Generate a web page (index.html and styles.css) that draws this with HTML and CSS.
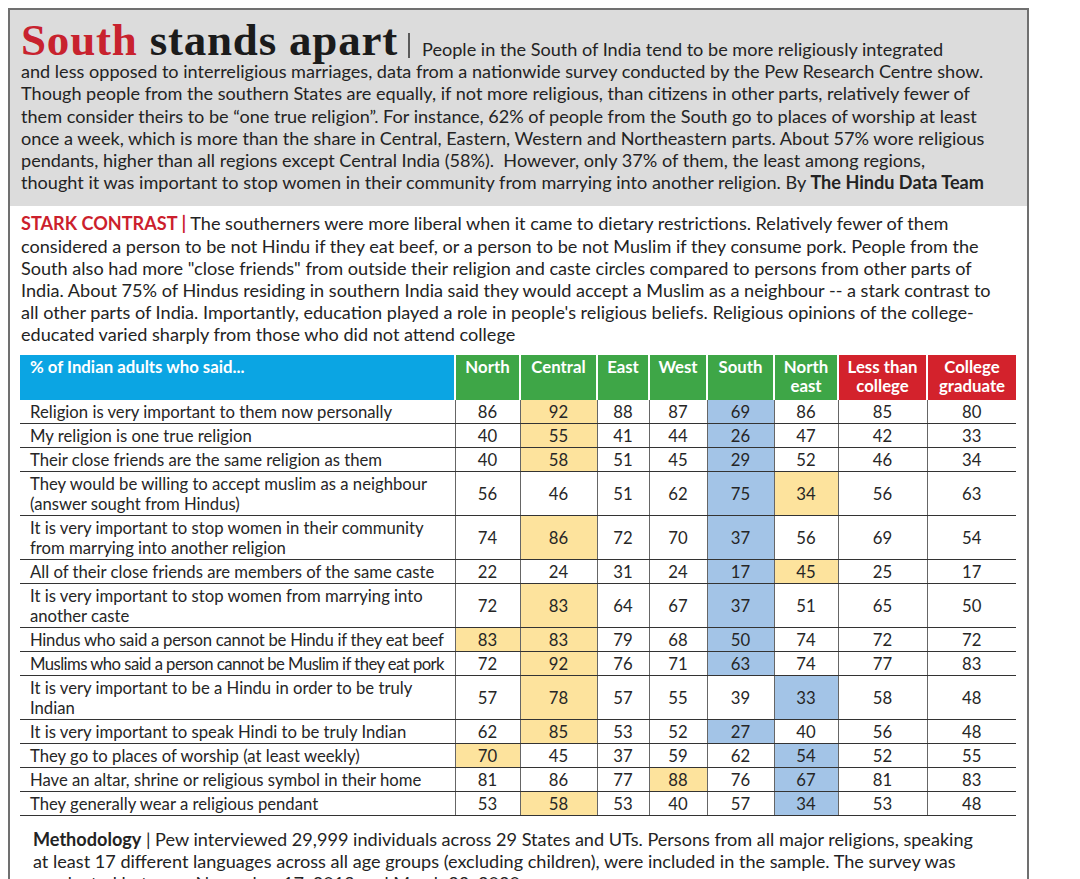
FILE: index.html
```html
<!DOCTYPE html>
<html lang="en">
<head>
<meta charset="utf-8">
<title>South stands apart</title>
<link rel="stylesheet" href="styles.css">
</head>
<body>
<div class="frame">
  <section class="intro">
    <p><span class="title"><span class="red">South</span> stands apart</span><span class="bar"></span>People in the South of India tend to be more religiously integrated<br>and less opposed to interreligious marriages, data from a nationwide survey conducted by the Pew Research Centre show.<br>Though people from the southern States are equally, if not more religious, than citizens in other parts, relatively fewer of<br>them consider theirs to be “one true religion”. For instance, 62% of people from the South go to places of worship at least<br>once a week, which is more than the share in Central, Eastern, Western and Northeastern parts. About 57% wore religious<br>pendants, higher than all regions except Central India (58%).&nbsp; However, only 37% of them, the least among regions,<br>thought it was important to stop women in their community from marrying into another religion. By <b>The Hindu Data Team</b></p>
  </section>
  <section class="contrast">
    <p><span class="kicker">STARK CONTRAST |</span> The southerners were more liberal when it came to dietary restrictions. Relatively fewer of them<br>considered a person to be not Hindu if they eat beef, or a person to be not Muslim if they consume pork. People from the<br>South also had more "close friends" from outside their religion and caste circles compared to persons from other parts of<br>India. About 75% of Hindus residing in southern India said they would accept a Muslim as a neighbour -- a stark contrast to<br>all other parts of India. Importantly, education played a role in people's religious beliefs. Religious opinions of the college-<br>educated varied sharply from those who did not attend college</p>
  </section>
  <table class="data">
    <colgroup>
      <col class="c-label"><col class="c-n"><col class="c-c"><col class="c-e"><col class="c-w"><col class="c-s"><col class="c-ne"><col class="c-edu"><col class="c-edu">
    </colgroup>
    <thead>
      <tr>
        <th class="label">% of Indian adults who said...</th>
        <th class="reg">North</th>
        <th class="reg">Central</th>
        <th class="reg">East</th>
        <th class="reg">West</th>
        <th class="reg">South</th>
        <th class="reg">North<br>east</th>
        <th class="edu">Less than<br>college</th>
        <th class="edu">College<br>graduate</th>
      </tr>
    </thead>
    <tbody>
      <tr><td class="label">Religion is very important to them now personally</td><td>86</td><td class="y">92</td><td>88</td><td>87</td><td class="b">69</td><td>86</td><td>85</td><td>80</td></tr>
      <tr><td class="label">My religion is one true religion</td><td>40</td><td class="y">55</td><td>41</td><td>44</td><td class="b">26</td><td>47</td><td>42</td><td>33</td></tr>
      <tr><td class="label">Their close friends are the same religion as them</td><td>40</td><td class="y">58</td><td>51</td><td>45</td><td class="b">29</td><td>52</td><td>46</td><td>34</td></tr>
      <tr><td class="label">They would be willing to accept muslim as a neighbour<br>(answer sought from Hindus)</td><td>56</td><td>46</td><td>51</td><td>62</td><td class="b">75</td><td class="y">34</td><td>56</td><td>63</td></tr>
      <tr><td class="label">It is very important to stop women in their community<br>from marrying into another religion</td><td>74</td><td class="y">86</td><td>72</td><td>70</td><td class="b">37</td><td>56</td><td>69</td><td>54</td></tr>
      <tr><td class="label">All of their close friends are members of the same caste</td><td>22</td><td>24</td><td>31</td><td>24</td><td class="b">17</td><td class="y">45</td><td>25</td><td>17</td></tr>
      <tr><td class="label">It is very important to stop women from marrying into<br>another caste</td><td>72</td><td class="y">83</td><td>64</td><td>67</td><td class="b">37</td><td>51</td><td>65</td><td>50</td></tr>
      <tr><td class="label tight">Hindus who said a person cannot be Hindu if they eat beef</td><td class="y">83</td><td class="y">83</td><td>79</td><td>68</td><td class="b">50</td><td>74</td><td>72</td><td>72</td></tr>
      <tr><td class="label tighter">Muslims who said a person cannot be Muslim if they eat pork</td><td>72</td><td class="y">92</td><td>76</td><td>71</td><td class="b">63</td><td>74</td><td>77</td><td>83</td></tr>
      <tr><td class="label">It is very important to be a Hindu in order to be truly<br>Indian</td><td>57</td><td class="y">78</td><td>57</td><td>55</td><td>39</td><td class="b">33</td><td>58</td><td>48</td></tr>
      <tr><td class="label">It is very important to speak Hindi to be truly Indian</td><td>62</td><td class="y">85</td><td>53</td><td>52</td><td class="b">27</td><td>40</td><td>56</td><td>48</td></tr>
      <tr><td class="label">They go to places of worship (at least weekly)</td><td class="y">70</td><td>45</td><td>37</td><td>59</td><td>62</td><td class="b">54</td><td>52</td><td>55</td></tr>
      <tr><td class="label">Have an altar, shrine or religious symbol in their home</td><td>81</td><td>86</td><td>77</td><td class="y">88</td><td>76</td><td class="b">67</td><td>81</td><td>83</td></tr>
      <tr><td class="label">They generally wear a religious pendant</td><td>53</td><td class="y">58</td><td>53</td><td>40</td><td>57</td><td class="b">34</td><td>53</td><td>48</td></tr>
    </tbody>
  </table>
  <p class="method"><b>Methodology</b> | Pew interviewed 29,999 individuals across 29 States and UTs. Persons from all major religions, speaking<br>at least 17 different languages across all age groups (excluding children), were included in the sample. The survey was<br>conducted between November 17, 2019 and March 23, 2020.</p>
</div>
</body>
</html>
```

FILE: styles.css
```css
* { box-sizing: border-box; }

body {
  margin: 8px;
  background: #ffffff;
  color: #232323;
  font-family: Lato, "Noto Sans", sans-serif;
}

.frame {
  width: 1021px;
  border: 2px solid #707070;
  border-bottom: none;
  padding-bottom: 40px;
}

.intro {
  background: #dcdcdc;
  padding: 19px 10px 13px 11px;
}

.intro p,
.contrast p,
.method {
  margin: 0;
  font-size: 18.1px;
  line-height: 22.2px;
  white-space: nowrap;
}

.title {
  font-family: "Liberation Serif", "Times New Roman", serif;
  font-weight: 700;
  font-size: 45px;
  line-height: 22px;
  letter-spacing: 0.8px;
  color: #1b1b1b;
  vertical-align: 1px;
}

.title .red { color: #c8222e; }

.bar {
  display: inline-block;
  width: 2px;
  height: 25px;
  background: #5a5a5a;
  margin: 0 12px 0 10px;
  vertical-align: -2px;
}

.contrast {
  padding: 6px 10px 9px 11px;
}

.kicker {
  color: #cc1f2d;
  font-weight: 700;
}

.data {
  margin: 0 11px 0 10px;
  width: 996px;
  border-collapse: collapse;
  table-layout: fixed;
  font-size: 16.7px;
}

.c-label { width: 435px; }
.c-n { width: 65px; }
.c-c { width: 77px; }
.c-e { width: 52px; }
.c-w { width: 58px; }
.c-s { width: 67px; }
.c-ne { width: 64px; }
.c-edu { width: 89px; }

.data th {
  color: #ffffff;
  font-weight: 700;
  font-size: 16.8px;
  line-height: 19px;
  padding: 2px 2px 5px;
  vertical-align: top;
  text-align: center;
  border-left: 2px solid #ffffff;
  white-space: nowrap;
}

.data th.label {
  background: #0ba5e3;
  text-align: left;
  padding-left: 10px;
  border-left: none;
}

.data th.reg { background: #3ea647; }
.data th.edu { background: #d3222c; }

.data td {
  line-height: 20px;
  padding: 2px 0 1px;
  border-bottom: 1px solid #333333;
  border-left: 1px solid #666666;
  text-align: center;
  vertical-align: middle;
  color: #262626;
}

.data td.label {
  text-align: left;
  padding-left: 10px;
  border-left: none;
  white-space: nowrap;
}

.data td.tight { letter-spacing: -0.25px; }
.data td.tighter { letter-spacing: -0.55px; }

.data td.y { background: #fde39d; }
.data td.b { background: #a3c4e7; }

.method {
  margin-top: 12px;
  padding-left: 23px;
}
```
